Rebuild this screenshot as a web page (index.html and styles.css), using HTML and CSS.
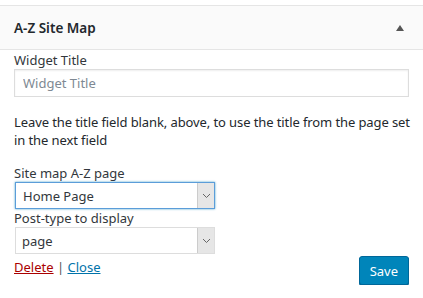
FILE: index.html
```html
<!DOCTYPE html>
<html>
<head>
    <title>A-Z Site Map widget</title>
    <link rel="stylesheet" href="styles.css">
</head>
<body>
    <div class="widget">
        <div class="widget-top">
            <h3>A-Z Site Map</h3>
            <span class="toggle"></span>
        </div>
        <div class="widget-inside">
            <label class="field-label" for="title">Widget Title</label>
            <input type="text" id="title" class="wide" placeholder="Widget Title">
            <p class="note">Leave the title field blank, above, to use the title from the page set in the next field</p>
            <label class="field-label" for="page">Site map A-Z page</label>
            <div class="select focus">
                <span>Home Page</span>
                <span class="arrow"><svg width="9" height="6" viewBox="0 0 9 6"><path d="M1 1l3.5 3.5L8 1" fill="none" stroke="#666" stroke-width="1"/></svg></span>
            </div>
            <label class="field-label" for="ptype">Post-type to display</label>
            <div class="select">
                <span>page</span>
                <span class="arrow"><svg width="9" height="6" viewBox="0 0 9 6"><path d="M1 1l3.5 3.5L8 1" fill="none" stroke="#666" stroke-width="1"/></svg></span>
            </div>
            <div class="actions">
                <div class="links"><a href="#" class="delete">Delete</a> | <a href="#" class="close">Close</a></div>
                <button class="save">Save</button>
            </div>
        </div>
    </div>
</body>
</html>
```

FILE: styles.css
```css
body {
    margin: 0;
    background: #fff;
    font-family: "Noto Sans", "Open Sans", sans-serif;
    font-size: 13px;
    color: #23282d;
}
.widget {
    margin-top: 5px;
    border-top: 1px solid #e5e5e5;
}
.widget-top {
    display: flex;
    align-items: center;
    justify-content: space-between;
    height: 43px;
    padding: 0 14px;
    background: #fafafa;
    border-bottom: 1px solid #e5e5e5;
}
.widget-top h3 {
    margin: 0;
    font-size: 13.5px;
    font-weight: 600;
    color: #23282d;
}
.toggle {
    width: 0;
    height: 0;
    margin-right: 5px;
    border-left: 4px solid transparent;
    border-right: 4px solid transparent;
    border-bottom: 6px solid #555;
}
.widget-inside {
    padding: 2px 14px 0;
}
.field-label {
    display: block;
    line-height: 17px;
    color: #32373c;
}
input.wide {
    display: block;
    box-sizing: border-box;
    width: 100%;
    height: 28px;
    padding: 3px 8px;
    border: 1px solid #ddd;
    box-shadow: inset 0 1px 2px rgba(0, 0, 0, 0.07);
    font-family: inherit;
    font-size: 13px;
    color: #32373c;
}
input.wide::placeholder {
    color: #7e8993;
}
.note {
    margin: 16px -8px 16px 0;
    line-height: 18px;
    letter-spacing: -0.1px;
    color: #23282d;
}
.select {
    box-sizing: border-box;
    display: flex;
    align-items: center;
    width: 200px;
    height: 27px;
    margin-left: 1px;
    border: 1px solid #ddd;
    background: #fff;
    font-size: 13px;
    color: #32373c;
}
.select span:first-child {
    flex: 1;
    padding-left: 6px;
}
.select.focus {
    margin-bottom: 1px;
    border: 1px solid #5b9dd9;
    box-shadow: 0 0 2px rgba(30, 140, 190, 0.8);
}
.select.focus span:first-child {
    padding-left: 7px;
}
.arrow {
    box-sizing: border-box;
    display: flex;
    align-items: center;
    justify-content: center;
    width: 17px;
    height: 100%;
    background: #e6e6e6;
    border-left: 1px solid #ccc;
}
.actions {
    display: flex;
    justify-content: space-between;
    align-items: flex-start;
    margin-top: 2px;
}
.links {
    margin-top: 2px;
    line-height: 18px;
    color: #555;
}
.links a {
    text-decoration: underline;
}
.delete {
    color: #a00;
}
.close {
    color: #0073aa;
}
.save {
    height: 29px;
    padding: 0 10px;
    border: 1px solid #006799;
    border-radius: 3px;
    background: #0085ba;
    box-shadow: 0 1px 0 #006799;
    color: #fff;
    font-family: inherit;
    font-size: 13px;
}
```
